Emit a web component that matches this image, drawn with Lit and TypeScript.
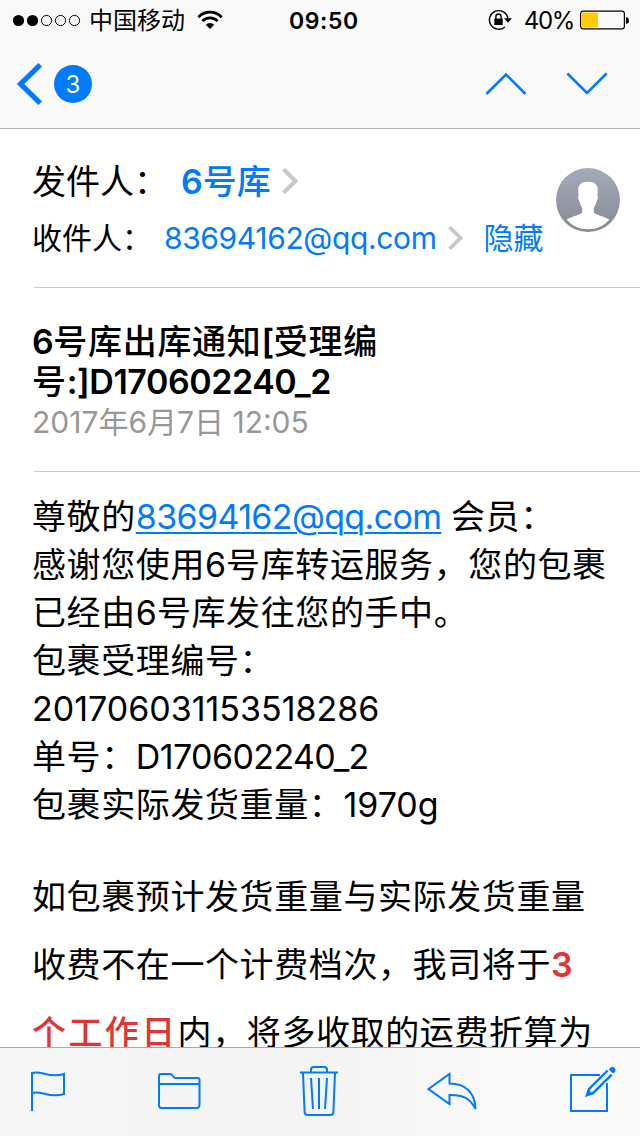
import { LitElement, html, css, svg } from "lit";
import { customElement, property } from "lit/decorators.js";

/** Splits mixed text into Latin and CJK runs so each gets its own tracking. */
const runs = (text: string) =>
  (text.match(/[\x20-\x7e]+|[^\x20-\x7e]+/g) ?? []).map((part) =>
    part.charCodeAt(0) < 0x7f
      ? html`<span class="latin">${part}</span>`
      : html`<span class="cjk">${part}</span>`
  );

const base = css`
  :host {
    display: block;
    box-sizing: border-box;
    font-family: Inter, "Noto Sans CJK SC", sans-serif;
  }
  * {
    box-sizing: border-box;
  }
  svg {
    display: block;
    flex: none;
  }
`;

@customElement("status-bar")
class StatusBar extends LitElement {
  static styles = [
    base,
    css`
      .bar {
        display: grid;
        grid-template-columns: 276px auto 1fr;
        align-items: center;
        height: 40px;
        padding: 0 11px 0 13px;
        color: #000;
        white-space: nowrap;
      }
      .side {
        display: flex;
        align-items: center;
      }
      .end {
        justify-content: flex-end;
      }
      .carrier {
        margin: -3px 12px 0 8px;
        font-size: 24px;
      }
      .time {
        padding-top: 1px;
        font-size: 23px;
        font-weight: 600;
        letter-spacing: 0.6px;
      }
      .charge {
        margin: 1px 6px 0 12px;
        font-size: 24px;
        letter-spacing: -1.3px;
      }
    `,
  ];
  render() {
    return html`<div class="bar">
      <div class="side">
        <svg width="68" height="12" viewBox="0 0 68 12">
          ${[0, 1, 2, 3, 4].map(
            (i) => svg`<circle cx=${5.5 + i * 14} cy="6.500" r=${i < 2 ? 5.6 : 5.1}
              fill=${i < 2 ? "#000" : "none"} stroke="#000" stroke-width=${i < 2 ? 0 : 1}/>`
          )}
        </svg>
        <span class="carrier">中国移动</span>
        <svg width="26" height="20" viewBox="0 0 26 20" fill="none" stroke="#000">
          <path d="M1.4 7.2a16 16 0 0 1 23.2 0" stroke-width="2.8" />
          <path d="M5.4 11a10.6 10.6 0 0 1 15.2 0" stroke-width="2.7" />
          <path d="M13 19l-4.2-4.3a6 6 0 0 1 8.4 0z" fill="#000" stroke="none" />
        </svg>
      </div>
      <span class="time">09:50</span>
      <div class="side end">
        <svg width="24" height="22" viewBox="0 0 24 22">
          <path d="M16.9 17.9a9.3 9.3 0 1 1 3-8.4" fill="none" stroke="#000" stroke-width="1.4" />
          <path d="M16 9.3h8l-4 4.4z" />
          <path d="M6.3 9.6h8.4v6.4H6.3z" />
          <path d="M7.9 10V7.6a2.6 2.6 0 0 1 5.2 0V10" fill="none" stroke="#000" stroke-width="1.4" />
        </svg>
        <span class="charge">40%</span>
        <svg width="49" height="20" viewBox="0 0 49 20">
          <rect x=".6" y="1.1" width="43.8" height="17.8" rx="2.6" fill="none" stroke="#000" stroke-width="1.2" />
          <rect x="2" y="2.6" width="16" height="14.8" rx="1" fill="#fc0" />
          <path d="M46 7c2 .3 3 1.500 3 3.500s-1 3.200-3 3.500z" />
        </svg>
      </div>
    </div>`;
  }
}

@customElement("mail-nav")
class MailNav extends LitElement {
  @property({ type: Number }) unread = 0;
  static styles = [
    base,
    css`
      .nav {
        display: flex;
        align-items: center;
        height: 88px;
        padding: 0 32px 0 16px;
      }
      .badge {
        width: 38px;
        height: 38px;
        margin: 0 auto 0 12px;
        border-radius: 50%;
        background: #007aff;
        color: #fff;
        font-size: 24px;
        line-height: 39px;
        text-align: center;
      }
      .arrows {
        display: flex;
        gap: 39px;
      }
    `,
  ];
  render() {
    return html`<div class="nav">
      <svg width="26" height="42" viewBox="0 0 26 42" fill="none" stroke="#007aff" stroke-width="5.200">
        <path d="M24.200 1.800L4.600 21l19.600 19.200" />
      </svg>
      <span class="badge">${this.unread}</span>
      <div class="arrows">
        <svg width="42" height="24" viewBox="0 0 42 24" fill="none" stroke="#007aff" stroke-width="2.6">
          <path d="M1.400 22L21 2.500l19.600 19.500" />
        </svg>
        <svg width="42" height="24" viewBox="0 0 42 24" fill="none" stroke="#007aff" stroke-width="2.6">
          <path d="M1.400 1.500L21 21 40.600 1.500" />
        </svg>
      </div>
    </div>`;
  }
}

@customElement("mail-header")
class MailHeader extends LitElement {
  static styles = [
    base,
    css`
      .people {
        display: flex;
        justify-content: space-between;
        height: 159px;
        margin-left: 34px;
        padding: 23px 20px 0 0;
        border-bottom: 1px solid #c8c7cc;
      }
      .row {
        display: flex;
        align-items: center;
        height: 58px;
        margin-left: -2px;
        white-space: nowrap;
      }
      .from {
        font-size: 34px;
      }
      .to {
        height: 56px;
        font-size: 30px;
      }
      .label,
      .name,
      .hide {
        padding-bottom: 4px;
      }
      .label {
        width: 149px;
      }
      .to .label {
        width: 132px;
      }
      .link {
        color: #007aff;
      }
      .name {
        font-weight: 500;
        margin-right: 11px;
      }
      .name .latin {
        font-weight: 600;
      }
      .address {
        margin-right: 11px;
        letter-spacing: -0.36px;
      }
      .hide {
        margin-left: 21px;
      }
      .avatar {
        margin-top: 16px;
      }
      .subject {
        height: 184px;
        margin-left: 34px;
        padding-top: 34px;
        border-bottom: 1px solid #c8c7cc;
        white-space: nowrap;
      }
      .title {
        margin: 0 0 0 -2px;
        font-size: 34px;
        font-weight: 500;
        line-height: 40px;
        letter-spacing: 0.7px;
      }
      .title .latin {
        font-weight: 600;
        letter-spacing: -0.45px;
      }
      .date {
        margin-left: -2px;
        font-size: 30px;
        line-height: 40px;
        color: #979797;
      }
    `,
  ];
  chevron(w: number, h: number) {
    return html`<svg width=${w} height=${h} viewBox="0 0 16 26" fill="none" stroke="#c7c7cc" stroke-width="4">
      <path d="M1.500 1.300L13.500 13l-12 11.700" />
    </svg>`;
  }
  render() {
    return html`
      <div class="people">
        <div>
          <div class="row from">
            <span class="label">发件人：</span>
            <span class="link name">${runs("6号库")}</span>
            ${this.chevron(16, 26)}
          </div>
          <div class="row to">
            <span class="label">收件人：</span>
            <span class="link address">83694162@qq.com</span>
            ${this.chevron(15, 24)}
            <span class="link hide">隐藏</span>
          </div>
        </div>
        <svg class="avatar" width="64" height="64" viewBox="0 0 64 64">
          <defs>
            <linearGradient id="disc" x1="0" y1="0" x2="0" y2="1">
              <stop offset="0" stop-color="#a5abb9" />
              <stop offset="1" stop-color="#858993" />
            </linearGradient>
          </defs>
          <circle cx="32" cy="32" r="32" fill="url(#disc)" />
          <path
            fill="#fff"
            d="M32 13.700c6.500 0 10.200 3 9.800 9.500l-.4 4.800c1 .6.200 4.400-.9 5-.4 3-1.200 5-2.700 6.700v4.500c1 3 9.600 3.200 15.500 7.400C48 58.300 40.500 61.300 32 61.300S16 58.300 10.700 51.600c5.900-4.200 14.500-4.400 15.500-7.400v-4.500c-1.500-1.700-2.300-3.700-2.700-6.700-1.100-.6-1.900-4.400-.9-5l-.4-4.800C21.800 16.700 25.500 13.700 32 13.700z"
          />
        </svg>
      </div>
      <div class="subject">
        <h1 class="title">${runs("6号库出库通知[受理编")}<br />${runs("号:]D170602240_2")}</h1>
        <div class="date">${runs("2017年6月7日 12:05")}</div>
      </div>
    `;
  }
}

@customElement("mail-body")
class MailBody extends LitElement {
  static styles = [
    base,
    css`
      .text {
        padding: 21px 0 0 32px;
        font-size: 34px;
        line-height: 48px;
        white-space: nowrap;
        color: #000;
      }
      .line {
        height: 48px;
      }
      .link {
        color: #007aff;
        letter-spacing: -0.63px;
        text-decoration: underline;
        text-decoration-thickness: 2px;
        text-underline-offset: 3px;
      }
      .cjk {
        letter-spacing: 0.6px;
      }
      .code {
        letter-spacing: -0.6px;
      }
      .notice {
        margin-top: 34px;
        line-height: 68px;
      }
      .notice .line {
        height: 68px;
      }
      .alert {
        color: #e53333;
        font-weight: 600;
      }
      .alert .cjk {
        font-weight: 500;
        letter-spacing: 2.4px;
      }
    `,
  ];
  render() {
    return html`<div class="text">
      <div class="line">${runs("尊敬的")}<span class="link">83694162@qq.com</span>${runs(" 会员：")}</div>
      ${[
        "感谢您使用6号库转运服务，您的包裹",
        "已经由6号库发往您的手中。",
        "包裹受理编号：",
        "201706031153518286",
      ].map((line) => html`<div class="line">${runs(line)}</div>`)}
      <div class="line code">${runs("单号：D170602240_2")}</div>
      <div class="line">${runs("包裹实际发货重量：1970g")}</div>
      <div class="notice">
        <div class="line">${runs("如包裹预计发货重量与实际发货重量")}</div>
        <div class="line">${runs("收费不在一个计费档次，我司将于")}<span class="alert">${runs("3")}</span></div>
        <div class="line"><span class="alert">${runs("个工作日")}</span>${runs("内，将多收取的运费折算为")}</div>
      </div>
    </div>`;
  }
}

@customElement("mail-toolbar")
class MailToolbar extends LitElement {
  static styles = [
    base,
    css`
      .tools {
        display: grid;
        grid-template-columns: 128px 142px 127px 143px auto;
        height: 89px;
        padding: 18px 0 0 30px;
        border-top: 1px solid #a9a9ab;
        background: linear-gradient(90deg, #f6f6f6, #f4f4f4 50%, #f9f9f9 75%);
      }
      svg {
        fill: none;
        stroke: #007aff;
        stroke-width: 2;
      }
      .solid {
        fill: #007aff;
        stroke: none;
      }
    `,
  ];
  render() {
    return html`<div class="tools">
      <svg width="36" height="52" viewBox="0 0 36 52">
        <path d="M2 45V7c10-3 17 6 32 1v20C19 33 12 24 2 27" />
      </svg>
      <svg width="44" height="52" viewBox="0 0 44 52">
        <path d="M1 37V10q0-2 2-2H12q2 0 3 2.200t3 1.800h21.500q2 0 2 2V38q0 4-2.500 4h-36Q1 42 1 39zM1 18h40.500" />
      </svg>
      <svg width="40" height="52" viewBox="0 0 40 52">
        <path d="M0 6.500h38M11 6V3.500Q11 1 13.500 1h11Q27 1 27 3.500V6M3 7l1.600 39q.2 3 3 3h22.800q2.800 0 3-3L35 7M11 12l2 31M19 12v31M27 12l-2 31" />
      </svg>
      <svg width="52" height="52" viewBox="0 0 52 52">
        <path d="M1.500 23L22.500 8v9.500C39 17.500 48 27 48.500 43 43 32 35 28.500 22.500 29v9z" />
      </svg>
      <svg width="48" height="52" viewBox="0 0 48 52">
        <path d="M30 9H1v36h36V17" />
        <path d="M37.600 4.500L19 23.200l-2 6 6-2L41.700 8.600" stroke-width="2.400" />
        <path class="solid" d="M15.500 30.600l2.600-7.400 4.800 4.800z" />
        <path class="solid" d="M38.800 3.400L40.600 1.600q2-1.600 4 .3t.4 4L43 7.600z" />
      </svg>
    </div>`;
  }
}

@customElement("app-root")
class AppRoot extends LitElement {
  static styles = [
    base,
    css`
      :host {
        height: 1136px;
        overflow: hidden;
      }
      .screen {
        display: flex;
        flex-direction: column;
        height: 100%;
        background: #fff;
      }
      .top {
        flex: none;
        height: 129px;
        border-bottom: 1px solid #b2b2b2;
        background: #f9f9f9;
      }
      .content {
        flex: 1;
        min-height: 0;
        overflow: hidden;
      }
    `,
  ];
  render() {
    return html`<div class="screen">
      <div class="top">
        <status-bar></status-bar>
        <mail-nav unread="3"></mail-nav>
      </div>
      <div class="content">
        <mail-header></mail-header>
        <mail-body></mail-body>
      </div>
      <mail-toolbar></mail-toolbar>
    </div>`;
  }
}
